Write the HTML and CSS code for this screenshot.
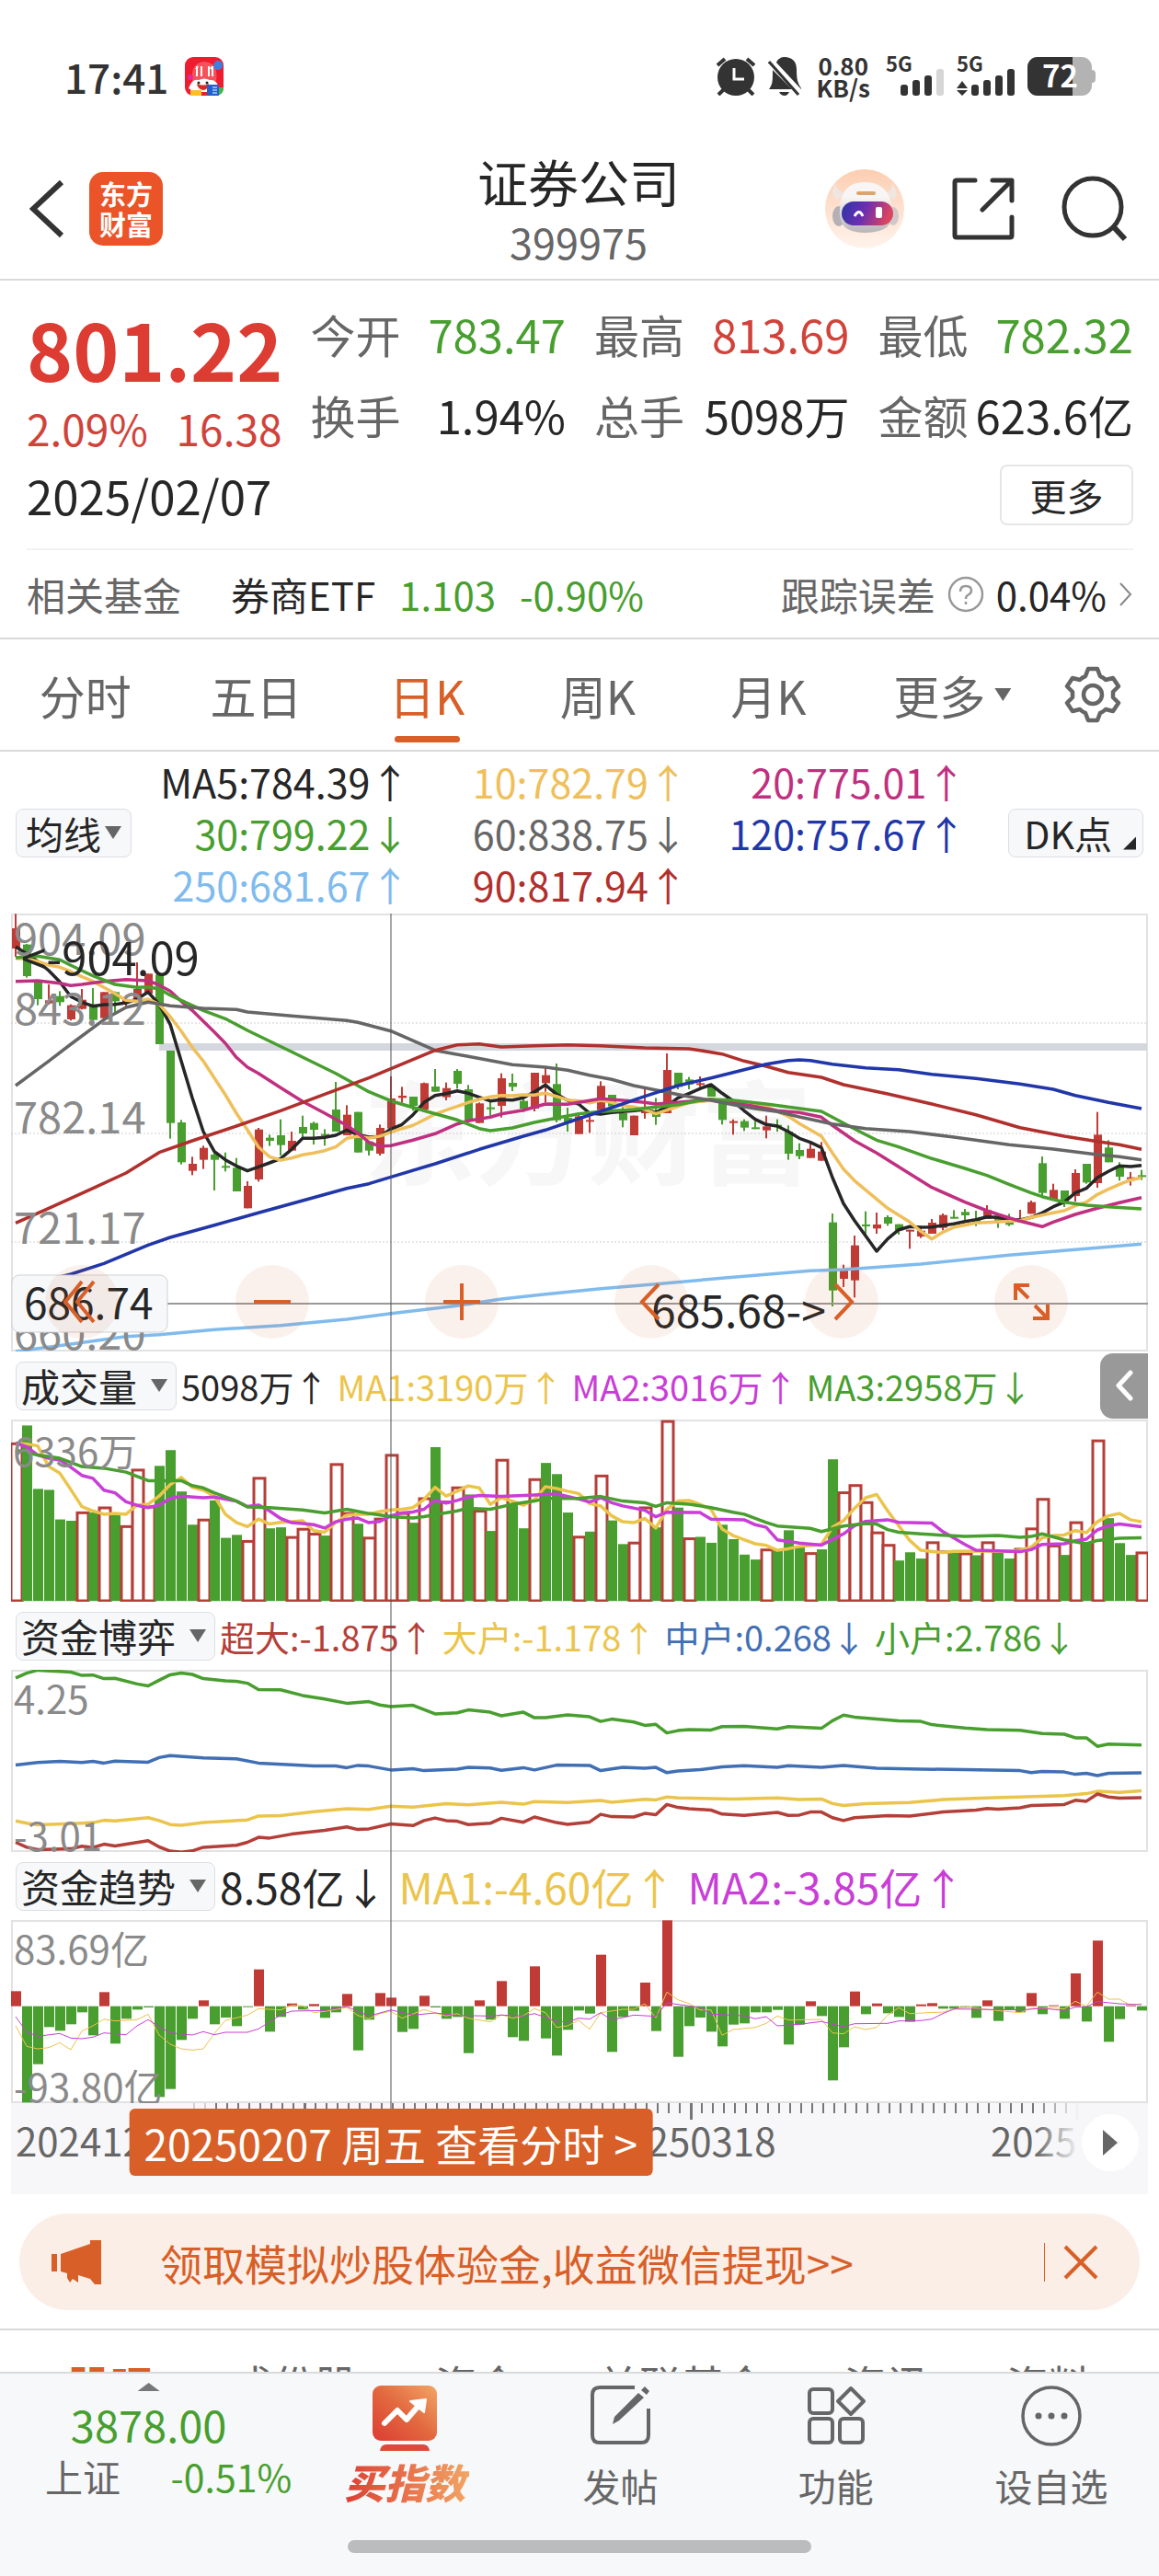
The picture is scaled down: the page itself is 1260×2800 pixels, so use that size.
FILE: index.html
```html
<!DOCTYPE html>
<html lang="zh-CN">
<head>
    <meta charset="UTF-8">
    <meta name="viewport" content="width=device-width, initial-scale=1.0">
    <title>证券公司 399975</title>
    <link rel="stylesheet" href="styles.css">
</head>
<body>
    <div class="status-bar">
        <span class="clock">17:41</span>
        <svg class="app-badge" width="42" height="42" viewBox="0 0 42 42">
            <rect width="42" height="42" rx="9" fill="#ee1c2e"/>
            <path d="M8 26 Q6 6 21 5 Q37 6 34 26z" fill="#f5525c"/>
            <circle cx="36" cy="9" r="5" fill="#3d7fe0"/>
            <circle cx="6" cy="22" r="3" fill="#e22a9a"/>
            <path d="M33 33 h9 v2 a8 8 0 0 1 -8 7z" fill="#43b649"/>
            <path d="M13 10v11M18 10v11M26 10v11M30 10v11M12 13l2-3M28 13l2-3" stroke="#fff" stroke-width="2" fill="none"/>
            <path d="M4 34 Q8 23 15 25 Q21 22 27 25 Q35 24 37 34 L30 38 H10z" fill="#fff"/>
            <path d="M13 29 Q20 32 26 29 Q25 36 20 36 Q14 35 13 29z" fill="#d52b25"/>
            <circle cx="15" cy="28" r="1.5" fill="#222"/>
            <circle cx="24" cy="28" r="1.5" fill="#222"/>
            <rect x="6" y="36" width="12" height="6" fill="#f8c12c"/>
            <rect x="24" y="30" width="13" height="12" rx="1" fill="#1f62cf"/>
            <path d="M30 33h5M30 36h5M30 39h5" stroke="#fff" stroke-width="1"/>
        </svg>
        <div class="status-icons">
            <svg width="44" height="42" viewBox="0 0 44 42">
                <circle cx="22" cy="22" r="20" fill="#333"/>
                <path d="M2 9 L10 2 M34 2 L42 9 M9 35 L3 41 M35 35 L41 41" stroke="#333" stroke-width="4" fill="none"/>
                <path d="M20 12 V24 H31" stroke="#fff" stroke-width="3" fill="none"/>
            </svg>
            <svg width="36" height="42" viewBox="0 0 36 42">
                <path d="M1 35 C5 29 5 27 5 14 L26 35z M9 6 C11 1 15 0 18 0 C26 0 31 5 31 13 C31 24 32 28 36 34 V35z" fill="#333"/>
                <path d="M1 5 L33 41" stroke="#333" stroke-width="3"/>
                <path d="M12 38 H23 Q21 42 18 42 Q14 42 12 38z" fill="#333"/>
            </svg>
            <div class="net-speed"><span>0.80</span><span>KB/s</span></div>
            <svg class="signal" width="64" height="42" viewBox="0 0 64 42">
                <text class="signal-text" x="0" y="16">5G</text>
                <rect x="16" y="30" width="8" height="12" rx="3"/>
                <rect x="29" y="25" width="8" height="17" rx="3"/>
                <rect x="42" y="20" width="8" height="22" rx="3"/>
                <rect x="55" y="13" width="8" height="29" rx="3" fill="#d6d6d6"/>
            </svg>
            <svg class="signal" width="64" height="42" viewBox="0 0 64 42">
                <text class="signal-text" x="0" y="16">5G</text>
                <path d="M0 34 L6 26 L12 34z M0 36 L6 42 L12 36z"/>
                <rect x="16" y="30" width="8" height="12" rx="3"/>
                <rect x="29" y="25" width="8" height="17" rx="3"/>
                <rect x="42" y="20" width="8" height="22" rx="3"/>
                <rect x="55" y="13" width="8" height="29" rx="3"/>
            </svg>
            <svg class="battery" width="74" height="42" viewBox="0 0 74 42">
                <rect x="66" y="14" width="8" height="14" rx="4" fill="#b3b3b3"/>
                <rect width="70" height="42" rx="11" fill="#b3b3b3"/>
                <path d="M11 0 H49 V42 H11 A11 11 0 0 1 0 31 V11 A11 11 0 0 1 11 0z" fill="#333"/>
                <text class="battery-text" x="16" y="33">72</text>
            </svg>
        </div>
    </div>

    <header class="header">
        <div class="header-side">
            <a class="back" href="#" aria-label="返回">
                <svg width="38" height="64" viewBox="0 0 38 64"><path d="M35 3 L4 32 L35 61" fill="none" stroke="#333" stroke-width="6"/></svg>
            </a>
            <a class="brand" href="#"><span>东方</span><span>财富</span></a>
        </div>
        <div class="title">
            <h1>证券公司</h1>
            <span class="code">399975</span>
        </div>
        <div class="header-side header-actions">
            <button aria-label="智能助手">
                <svg width="88" height="88" viewBox="0 0 88 88">
                    <defs>
                        <linearGradient id="halo" x1="0" y1="0" x2="0" y2="1">
                            <stop offset="0" stop-color="#fcceb2"/>
                            <stop offset="1" stop-color="#fff3ec"/>
                        </linearGradient>
                        <linearGradient id="visor" x1="0" y1="0" x2="1" y2="0.2">
                            <stop offset="0" stop-color="#2b35a8"/>
                            <stop offset="0.5" stop-color="#6b2fb0"/>
                            <stop offset="1" stop-color="#dc4560"/>
                        </linearGradient>
                        <linearGradient id="shell" x1="0" y1="0" x2="0" y2="1">
                            <stop offset="0.3" stop-color="#f8f5f4"/>
                            <stop offset="1" stop-color="#b9b4b8"/>
                        </linearGradient>
                    </defs>
                    <circle cx="44" cy="44" r="43" fill="url(#halo)"/>
                    <path d="M12 16 Q6 28 14 34 L24 27 Q14 26 12 16z M74 16 Q82 28 76 34 L66 27 Q74 26 74 16z" fill="#efe6e2"/>
                    <ellipse cx="16" cy="52" rx="7" ry="11" fill="#b5b0b5"/>
                    <ellipse cx="75" cy="52" rx="6" ry="10" fill="#d0c8ca"/>
                    <path d="M17 44 Q18 15 44 15 Q71 15 74 44 Q78 70 44 70 Q14 70 17 44z" fill="url(#shell)"/>
                    <rect x="19" y="36" width="56" height="26" rx="13" fill="url(#visor)"/>
                    <rect x="35" y="25" width="21" height="4" rx="2" fill="#dca56e"/>
                    <path d="M33 52 Q38 43 42 52" stroke="#fff" stroke-width="3" fill="none"/>
                    <rect x="56" y="42" width="7" height="12" rx="2" fill="#fff"/>
                </svg>
            </button>
            <button aria-label="分享">
                <svg width="70" height="70" viewBox="0 0 70 70" fill="none" stroke="#333" stroke-width="5" stroke-linecap="round" stroke-linejoin="round">
                    <path d="M26 4 H6 Q4 4 4 6 V64 Q4 66 6 66 H64 Q66 66 66 64 V44 M45 4 H66 V26 M65 5 L34 36"/>
                </svg>
            </button>
            <button aria-label="搜索">
                <svg width="72" height="72" viewBox="0 0 72 72" fill="none" stroke="#333" stroke-width="5">
                    <circle cx="34" cy="34" r="31"/>
                    <path d="M57 56 L69 69" stroke-width="6"/>
                </svg>
            </button>
        </div>
    </header>

    <section class="quote">
        <div class="quote-grid">
            <div class="quote-main">
                <div class="price">801.22</div>
                <div class="change"><span>2.09%</span><span>16.38</span></div>
            </div>
            <dl class="stats">
                <div><dt>今开</dt><dd class="green">783.47</dd></div>
                <div><dt>换手</dt><dd>1.94%</dd></div>
            </dl>
            <dl class="stats">
                <div><dt>最高</dt><dd class="red">813.69</dd></div>
                <div><dt>总手</dt><dd>5098万</dd></div>
            </dl>
            <dl class="stats">
                <div><dt>最低</dt><dd class="green">782.32</dd></div>
                <div><dt>金额</dt><dd>623.6亿</dd></div>
            </dl>
        </div>
        <div class="quote-date">
            <time datetime="2025-02-07">2025/02/07</time>
            <button class="more">更多</button>
        </div>
        <div class="fund">
            <span class="muted">相关基金</span>
            <a class="fund-name" href="#">券商ETF</a>
            <span class="green">1.103</span>
            <span class="green fund-change">-0.90%</span>
            <a class="fund-error" href="#">
                <span class="muted">跟踪误差</span>
                <svg width="40" height="40" viewBox="0 0 40 40"><circle cx="20" cy="20" r="18" fill="none" stroke="#999" stroke-width="2.5"/><path d="M14 17 Q14 11 20 11 Q26 11 26 16 Q26 19 22 21 Q20 22 20 25 M20 28 V31" fill="none" stroke="#999" stroke-width="2.5"/></svg>
                <span>0.04%</span>
                <svg width="16" height="28" viewBox="0 0 16 28"><path d="M2 2 L13 14 L2 26" fill="none" stroke="#888" stroke-width="2"/></svg>
            </a>
        </div>
    </section>

    <nav class="period-tabs">
        <a href="#">分时</a>
        <a href="#">五日</a>
        <a class="active" href="#">日K</a>
        <a href="#">周K</a>
        <a href="#">月K</a>
        <button class="period-more">更多<i class="caret"></i></button>
        <button class="settings" aria-label="设置">
            <svg width="62" height="62" viewBox="0 0 62 62" fill="none" stroke="#666" stroke-width="4.5" stroke-linejoin="round">
                <path d="M26 3 H36 L39 11 Q42 12 45 15 L53 13 L59 22 L53 28 V34 L59 40 L53 49 L45 47 Q42 50 39 51 L36 59 H26 L23 51 Q20 50 17 47 L9 49 L3 40 L9 34 V28 L3 22 L9 13 L17 15 Q20 12 23 11z"/>
                <circle cx="31" cy="31" r="10"/>
            </svg>
        </button>
    </nav>

    <section class="charts">
        <div class="ma-bar">
            <button class="chip">均线<i class="caret"></i></button>
            <div class="ma-list">
                <span>MA5:784.39<i class="arrow">↑</i></span>
                <span class="c-ma10">10:782.79<i class="arrow">↑</i></span>
                <span class="c-ma20">20:775.01<i class="arrow">↑</i></span>
                <span class="c-ma30">30:799.22<i class="arrow">↓</i></span>
                <span class="c-ma60">60:838.75<i class="arrow">↓</i></span>
                <span class="c-ma120">120:757.67<i class="arrow">↑</i></span>
                <span class="c-ma250">250:681.67<i class="arrow">↑</i></span>
                <span class="c-ma90">90:817.94<i class="arrow">↑</i></span>
            </div>
            <button class="chip chip-dk">DK点<i class="corner"></i></button>
        </div>

        <div class="plots">
            <div class="price-plot">
                <svg id="price-chart" class="chart" viewBox="0 0 1236 476"></svg>
                <div class="chart-tools">
                    <button aria-label="最早"><svg viewBox="0 0 80 80"><path d="M40 18 L22 40 L40 62 M53 18 L35 40 L53 62"/></svg></button>
                    <button aria-label="缩小"><svg viewBox="0 0 80 80"><path d="M20 40 H60"/></svg></button>
                    <button aria-label="放大"><svg viewBox="0 0 80 80"><path d="M20 40 H60 M40 20 V60"/></svg></button>
                    <button aria-label="左移"><svg viewBox="0 0 80 80"><path d="M48 21 L30 40 L48 59"/></svg></button>
                    <button aria-label="右移"><svg viewBox="0 0 80 80"><path d="M33 21 L51 40 L33 59"/></svg></button>
                    <button aria-label="全屏"><svg viewBox="0 0 80 80"><path d="M38 22 H23 V38 M24 23 L37 36 M42 58 H58 V43 M57 57 L44 44"/></svg></button>
                </div>
            </div>

            <div class="indicator">
                <button class="chip">成交量<i class="caret"></i></button>
                <div class="readout">
                    <span>5098万<i class="arrow">↑</i></span>
                    <span class="c-yellow">MA1:3190万<i class="arrow">↑</i></span>
                    <span class="c-purple">MA2:3016万<i class="arrow">↑</i></span>
                    <span class="green">MA3:2958万<i class="arrow">↓</i></span>
                </div>
                <button class="drawer" aria-label="展开">
                    <svg width="20" height="34" viewBox="0 0 20 34"><path d="M17 3 L4 17 L17 31" fill="none" stroke="#fff" stroke-width="5" stroke-linecap="round" stroke-linejoin="round"/></svg>
                </button>
            </div>
            <svg id="volume-chart" class="chart" viewBox="0 0 1236 198"></svg>

            <div class="indicator">
                <button class="chip">资金博弈<i class="caret"></i></button>
                <div class="readout">
                    <span class="c-red">超大:-1.875<i class="arrow">↑</i></span>
                    <span class="c-yellow">大户:-1.178<i class="arrow">↑</i></span>
                    <span class="c-blue">中户:0.268<i class="arrow">↓</i></span>
                    <span class="green">小户:2.786<i class="arrow">↓</i></span>
                </div>
            </div>
            <svg id="flow-chart" class="chart" viewBox="0 0 1236 198"></svg>

            <div class="indicator">
                <button class="chip">资金趋势<i class="caret"></i></button>
                <div class="readout readout-large">
                    <span>8.58亿<i class="arrow">↓</i></span>
                    <span class="c-yellow">MA1:-4.60亿<i class="arrow">↑</i></span>
                    <span class="c-purple">MA2:-3.85亿<i class="arrow">↑</i></span>
                </div>
            </div>
            <svg id="trend-chart" class="chart" viewBox="0 0 1236 199"></svg>

            <div class="axis">
                <svg id="axis" class="chart" viewBox="0 0 1236 99"></svg>
                <button class="axis-next" aria-label="播放"><svg width="16" height="28" viewBox="0 0 16 28"><path d="M0 0 L16 14 L0 28z" fill="#666"/></svg></button>
            </div>

            <div class="crosshair"></div>
            <button class="cursor-date">20250207 周五 查看分时 &gt;</button>
        </div>
    </section>

    <div class="promo">
        <svg width="54" height="48" viewBox="0 0 54 48" fill="#d85f27">
            <path d="M0 15 H6 V34 H0z M10 15 L42 4 V0 H54 V48 H47 L42 42 L29 38 V46 L23 42 L20 46 L17 41 V36 L10 34z"/>
        </svg>
        <a href="#">领取模拟炒股体验金,收益微信提现&gt;&gt;</a>
        <button aria-label="关闭">
            <svg width="38" height="38" viewBox="0 0 38 38"><path d="M2 2 L36 36 M36 2 L2 36" stroke="#d85f27" stroke-width="4"/></svg>
        </button>
    </div>

    <nav class="section-tabs">
        <a class="active" href="#">股吧</a>
        <a href="#">成份股</a>
        <a href="#">资金</a>
        <a href="#">关联基金</a>
        <a href="#">资讯</a>
        <a href="#">资料</a>
    </nav>

    <footer class="bottom-bar">
        <div class="bottom-items">
            <a class="index" href="#">
                <i class="caret-up"></i>
                <span class="index-value">3878.00</span>
                <span class="index-row"><span>上证</span><span class="green">-0.51%</span></span>
            </a>
            <a class="bottom-item buy" href="#">
                <svg width="72" height="72" viewBox="0 0 72 72">
                    <defs>
                        <linearGradient id="warm" x1="0" y1="1" x2="1" y2="0">
                            <stop offset="0" stop-color="#dc3c32"/>
                            <stop offset="0.5" stop-color="#e2683f"/>
                            <stop offset="1" stop-color="#f2a564"/>
                        </linearGradient>
                    </defs>
                    <rect x="1" y="1" width="70" height="60" rx="9" fill="url(#warm)"/>
                    <path d="M9 72 Q10 65 16 65 H56 Q62 65 63 72z" fill="#de4a35"/>
                    <path d="M14 42 L28 28 L38 38 L50 24" fill="none" stroke="#fff" stroke-width="6" stroke-linejoin="round" stroke-linecap="round"/>
                    <path d="M42 18 L59 16 L57 30z" fill="#fff" stroke="#fff" stroke-width="2" stroke-linejoin="round"/>
                </svg>
                <span>买指数</span>
            </a>
            <a class="bottom-item" href="#">
                <svg width="72" height="72" viewBox="0 0 72 72" fill="none" stroke="#666" stroke-width="4">
                    <path d="M51 3 H13 Q5 3 5 11 V55 Q5 63 13 63 H58 Q66 63 66 55 V26"/>
                    <path d="M27 43 L29 35 L55 9 L61 14 L34 39z M58 6 L62 2 L67 7 L64 11z" fill="#666" stroke="none"/>
                </svg>
                <span>发帖</span>
            </a>
            <a class="bottom-item" href="#">
                <svg width="72" height="72" viewBox="0 0 72 72" fill="none" stroke="#666" stroke-width="4">
                    <rect x="7" y="5" width="25" height="26" rx="4"/>
                    <rect x="7" y="37" width="25" height="26" rx="4"/>
                    <rect x="40" y="37" width="25" height="26" rx="4"/>
                    <path d="M52 4 L66 18 L52 32 L38 18z" stroke-linejoin="round"/>
                </svg>
                <span>功能</span>
            </a>
            <a class="bottom-item" href="#">
                <svg width="72" height="72" viewBox="0 0 72 72">
                    <circle cx="36" cy="34" r="31" fill="none" stroke="#666" stroke-width="3.5"/>
                    <g fill="#666"><circle cx="22" cy="34" r="3.5"/><circle cx="36" cy="34" r="3.5"/><circle cx="50" cy="34" r="3.5"/></g>
                </svg>
                <span>设自选</span>
            </a>
        </div>
        <div class="home-indicator"></div>
    </footer>

    <script src="chart.js"></script>
</body>
</html>
```

FILE: styles.css
```css
* {
    box-sizing: border-box;
}

body {
    margin: 0;
    background-color: #fff;
    color: #262626;
    font-family: "Noto Sans CJK SC", "Noto Sans", sans-serif;
    font-size: 42px;
}

a {
    color: inherit;
    text-decoration: none;
}

button {
    padding: 0;
    border: none;
    background: none;
    color: inherit;
    font: inherit;
    cursor: pointer;
}

svg {
    display: block;
    flex-shrink: 0;
}

i {
    font-style: normal;
}

h1, dl, dd {
    margin: 0;
}

.red { color: #d0433a; }
.green { color: #489e2e; }
.muted { color: #666; }
.c-red { color: #b43f38; }
.c-yellow { color: #ebc44b; }
.c-purple { color: #c83ed6; }
.c-blue { color: #416fb4; }
.c-ma10 { color: #efbf5b; }
.c-ma20 { color: #c03080; }
.c-ma30 { color: #489e2e; }
.c-ma60 { color: #666; }
.c-ma90 { color: #b0302d; }
.c-ma120 { color: #2136a8; }
.c-ma250 { color: #80bbee; }

.caret {
    width: 18px;
    height: 14px;
    background-color: #666;
    clip-path: polygon(0 0, 100% 0, 50% 100%);
}

/* status bar */

.status-bar {
    display: flex;
    align-items: center;
    height: 150px;
    padding: 16px 69px 0 70px;
    color: #333;
}

.clock {
    font-size: 44px;
    font-weight: 500;
    line-height: 60px;
}

.app-badge {
    margin-left: 18px;
}

.status-icons {
    display: flex;
    align-items: center;
    gap: 13px;
    margin-left: auto;
}

.net-speed {
    display: flex;
    flex-direction: column;
    align-items: center;
    margin: 0 4px;
    font-size: 26px;
    font-weight: 700;
    line-height: 24px;
}

.signal, .battery {
    overflow: visible;
    fill: #333;
}

.signal-text {
    font-size: 22px;
    font-weight: 700;
}

.battery-text {
    fill: #fff;
    font-size: 33px;
    font-weight: 700;
}

/* header */

.header {
    display: flex;
    align-items: center;
    justify-content: space-between;
    height: 155px;
    padding: 0 34px 0 32px;
    border-bottom: 2px solid #d9d9d9;
}

.header-side {
    display: flex;
    flex: 1;
    align-items: center;
    gap: 27px;
}

.header-actions {
    justify-content: flex-end;
    gap: 50px;
}

.brand {
    display: flex;
    flex-direction: column;
    align-items: center;
    justify-content: center;
    width: 80px;
    height: 80px;
    border-radius: 15px;
    background-color: #eb5429;
    color: #fff;
    font-size: 29px;
    font-weight: 700;
    line-height: 33px;
}

.title {
    text-align: center;
}

.title h1 {
    font-size: 55px;
    font-weight: 400;
    line-height: 72px;
}

.code {
    display: block;
    color: #666;
    font-size: 45px;
    line-height: 62px;
}

/* quote */

.quote {
    padding: 28px 28px 0 29px;
    border-bottom: 2px solid #d9d9d9;
}

.quote-grid {
    display: grid;
    grid-template-columns: repeat(4, minmax(0, 1fr));
    gap: 31px;
}

.price {
    color: #dd3c33;
    font-size: 85px;
    font-weight: 700;
    line-height: 90px;
}

.change {
    display: flex;
    justify-content: space-between;
    margin-top: 12px;
    color: #d0433a;
    font-size: 46px;
    line-height: 60px;
}

.stats {
    display: flex;
    flex-direction: column;
    gap: 28px;
    font-size: 49px;
    line-height: 60px;
}

.stats div {
    display: flex;
    justify-content: space-between;
    white-space: nowrap;
}

.stats dt {
    color: #666;
}

.quote-date {
    display: flex;
    align-items: center;
    justify-content: space-between;
    margin-top: 10px;
    font-size: 51px;
    line-height: 66px;
}

.more {
    width: 145px;
    height: 66px;
    border: 2px solid #e6e6e6;
    border-radius: 8px;
    font-size: 40px;
    line-height: 60px;
}

.fund {
    display: flex;
    align-items: center;
    height: 97px;
    margin-top: 25px;
    border-top: 2px solid #f2f2f4;
}

.fund-name {
    margin: 0 26px 0 54px;
}

.fund-change {
    margin-left: 26px;
}

.fund-error {
    display: flex;
    align-items: center;
    gap: 13px;
    margin-left: auto;
}

/* period tabs */

.period-tabs {
    display: flex;
    align-items: center;
    height: 122px;
    padding-right: 41px;
    border-bottom: 2px solid #d9d9d9;
    color: #666;
    font-size: 50px;
}

.period-tabs a {
    position: relative;
    flex: 1;
    line-height: 122px;
    text-align: center;
}

.period-tabs .active {
    color: #d85f27;
}

.period-tabs .active::after {
    position: absolute;
    bottom: 9px;
    left: 50%;
    width: 71px;
    height: 7px;
    margin-left: -35px;
    border-radius: 4px;
    background-color: #d85f27;
    content: "";
}

.period-more {
    display: flex;
    flex: 1;
    align-items: center;
    gap: 10px;
    padding-left: 43px;
}

/* charts */

.chip {
    display: flex;
    flex-shrink: 0;
    align-items: center;
    height: 53px;
    padding: 0 9px 0 5px;
    border: 1px solid #dcdee2;
    border-radius: 8px;
    background-color: #f6f8fa;
    line-height: 50px;
}

.ma-bar {
    display: flex;
    align-items: center;
    height: 176px;
    padding: 0 17px;
    font-size: 43px;
}

.ma-bar .chip {
    padding: 0 10px 0 10px;
    font-size: 41px;
}

.ma-bar .caret {
    margin-left: 4px;
}

.ma-bar .chip-dk {
    position: relative;
    padding: 0 33px 0 16px;
}

.corner {
    position: absolute;
    right: 7px;
    bottom: 7px;
    width: 14px;
    height: 14px;
    background-color: #262626;
    clip-path: polygon(100% 0, 100% 100%, 0 100%);
}

.ma-list {
    display: grid;
    flex: 1;
    grid-template-columns: 29fr 30fr 30fr;
    padding-right: 56px;
    line-height: 56px;
    text-align: right;
    white-space: nowrap;
}

/* the arrow glyph fills a full square, pull its sides in */
.arrow {
    margin: 0 -10px 0 0;
}

.plots {
    position: relative;
    margin: 0 12px;
}

.chart {
    width: 100%;
    height: auto;
}

.chart text {
    fill: #8a8a8a;
}

.chart .dark {
    fill: #262626;
}

.chart .watermark {
    fill: #f7f7f8;
    font-weight: 700;
}

.price-plot {
    position: relative;
}

.chart-tools {
    position: absolute;
    right: 7%;
    bottom: 14px;
    left: 3%;
    display: flex;
    justify-content: space-between;
}

.chart-tools button {
    width: 80px;
    height: 80px;
    border-radius: 50%;
    background-color: rgba(216, 95, 39, 0.09);
}

.chart-tools path {
    fill: none;
    stroke: #d85f27;
    stroke-width: 4;
}

.indicator {
    display: flex;
    align-items: center;
    height: 74px;
    padding-left: 5px;
}

.indicator .caret {
    margin-left: 15px;
}

.readout {
    display: flex;
    gap: 19px;
    margin-left: 5px;
    font-size: 38px;
    white-space: nowrap;
}

.readout-large {
    gap: 23px;
    font-size: 46px;
}

.drawer {
    display: flex;
    align-items: center;
    justify-content: center;
    width: 52px;
    height: 71px;
    margin-left: auto;
    border-radius: 14px 0 0 14px;
    background-color: #999;
}

.axis {
    position: relative;
    background-color: #f7f7f9;
}

.axis text {
    fill: #666;
}

.axis-next {
    position: absolute;
    top: 12px;
    right: 10px;
    display: flex;
    align-items: center;
    justify-content: center;
    width: 62px;
    height: 62px;
    border-radius: 50%;
    background-color: #fff;
}

.crosshair {
    position: absolute;
    top: 0;
    bottom: 90px;
    left: 33.3%;
    width: 2px;
    background-color: rgba(80, 80, 80, 0.5);
}

.cursor-date {
    position: absolute;
    bottom: 20px;
    left: 33.4%;
    height: 73px;
    padding: 0 16px;
    border-radius: 6px;
    background-color: #d85f27;
    color: #fff;
    font-size: 46px;
    line-height: 68px;
    white-space: nowrap;
    transform: translateX(-50%);
}

/* promo */

.promo {
    display: flex;
    align-items: center;
    height: 105px;
    margin: 21px 21px 20px;
    padding: 0 45px 0 35px;
    border-radius: 53px;
    background-color: #fbeee7;
    color: #d85f27;
    font-size: 46px;
    line-height: 60px;
}

.promo a {
    flex: 1;
    margin-left: 64px;
}

.promo button {
    padding: 2px 0 2px 20px;
    border-left: 1px solid #d85f27;
}

/* section tabs */

.section-tabs {
    display: flex;
    justify-content: space-between;
    height: 47px;
    padding: 17px 74px 0;
    border-top: 2px solid #d9d9d9;
    overflow: hidden;
    color: #666;
    font-size: 46px;
    line-height: 80px;
}

.section-tabs .active {
    color: #d85f27;
    font-weight: 700;
}

/* bottom bar */

.bottom-bar {
    height: 222px;
    border-top: 2px solid #d9dadc;
    background-color: #f6f8fa;
    color: #666;
    font-size: 41px;
}

.bottom-items {
    display: grid;
    grid-template-columns: 323fr repeat(4, 234fr);
    height: 181px;
}

.index {
    display: flex;
    flex-direction: column;
    align-items: center;
}

.caret-up {
    width: 24px;
    height: 9px;
    margin-top: 10px;
    background-color: #777;
    clip-path: polygon(50% 0, 100% 100%, 0 100%);
}

.index-value {
    margin-top: 5px;
    color: #489e2e;
    font-size: 47px;
    line-height: 62px;
}

.index-row {
    display: flex;
    align-self: stretch;
    justify-content: space-between;
    padding: 0 6px 0 49px;
    line-height: 50px;
}

.bottom-item {
    display: flex;
    flex-direction: column;
    align-items: center;
    padding-top: 12px;
    line-height: 60px;
}

.bottom-item span {
    margin-top: 7px;
}

.buy span {
    margin-top: 3px;
    padding: 0 4px;
    background: linear-gradient(90deg, #dc3c32, #f2a564);
    background-clip: text;
    -webkit-background-clip: text;
    color: transparent;
    font-size: 44px;
    font-style: italic;
    font-weight: 900;
}

.home-indicator {
    width: 40%;
    height: 14px;
    margin: 0 auto;
    border-radius: 7px;
    background-color: #bbbcbe;
}
```

FILE: chart.js
```javascript
const STEP = 12;
const FIRST = 5;
const RED = "#c13b36";
const GREEN = "#489e2e";

// one entry per day: colour, high, body top, body bottom, low
const candles = `r 40 87 153 180|g 138 140 243 248|g 262 262 318 338|r 270 322 332 336|g 292 308 328 340|r 335 338 384 388
r 285 320 350 352|g 282 335 386 388|r 295 295 380 380|g 293 295 325 365|r 305 318 330 345|r 198 285 318 318
r 235 235 300 300|g 238 238 465 465|g 486 486 722 773|g 712 720 850 857|r 832 855 878 892|r 796 803 842 872
g 818 825 842 942|g 818 862 867 880|g 836 868 945 945|r 912 927 1000 1000|r 738 743 906 913|g 760 770 780 797
g 710 762 794 828|r 750 780 812 812|g 698 735 756 775|g 718 722 744 792|g 742 758 763 796|g 588 678 750 750
r 664 695 762 762|g 686 686 818 818|g 782 782 812 828|r 727 738 822 828|r 570 642 740 740|r 604 633 640 656
g 636 636 666 682|r 590 592 678 678|g 546 603 620 620|r 590 608 638 648|g 546 552 594 610|g 598 612 712 712
r 655 658 722 722|g 650 671 676 698|r 560 576 666 704|g 561 591 604 618|g 645 650 675 686|r 558 558 675 684
r 540 566 592 655|g 528 595 713 720|g 672 705 722 750|r 690 700 758 758|r 700 712 717 754|r 586 601 680 680
g 630 630 668 668|g 670 690 713 736|r 698 698 762 762|r 604 672 690 708|g 640 690 702 728|r 495 549 690 690
g 558 558 604 612|g 572 580 596 612|r 570 592 597 605|g 600 600 636 636|g 650 650 712 727|r 710 716 721 760
g 710 716 737 748|g 715 736 742 742|r 698 733 746 772|g 710 728 734 750|g 730 750 822 842|g 788 810 830 840
r 786 806 836 836|r 784 815 845 845|g 1017 1046 1268 1320|r 1184 1202 1230 1257|r 1089 1121 1235 1291|g 1010 1053 1058 1086
r 1014 1053 1066 1083|g 1023 1029 1050 1057|g 1052 1052 1072 1086|r 1070 1070 1076 1132|r 1058 1073 1092 1097|r 1035 1047 1083 1083
r 1017 1022 1064 1072|g 1006 1028 1033 1033|g 1002 1012 1023 1038|g 1008 1035 1048 1058|r 990 1006 1034 1034|g 1018 1025 1047 1064
g 1018 1035 1054 1058|r 1005 1034 1040 1040|r 975 980 1018 1018|g 831 853 950 962|r 920 940 970 970|g 942 942 985 996
r 873 885 960 978|g 855 855 916 920|r 686 760 918 933|g 778 802 850 850|g 850 866 897 910|r 882 899 904 926|g 875 892 897 908`
    .split(/[|\n]/).map(row => row.split(" "));

const priceLines = [
    ["#262626", "0:147 1:170 2:195 3:225 4:262 5:310 6:328 7:341 8:336 9:335 10:330 11:318 12:295 13:335 14:400 15:520 16:640 17:750 18:815 19:842 20:862 21:878 22:865 23:852 24:838 25:808 26:772 27:772 28:769 29:762 30:745 31:760 32:768 33:766 34:742 35:727 36:695 37:655 38:632 39:626 40:617 41:625 42:638 43:650 44:646 45:647 46:640 47:620 48:598 49:628 50:648 51:660 52:690 53:693 54:688 56:682 57:678 58:688 59:668 60:640 61:626 62:610 63:597 64:625 65:650 66:682 67:710 68:727 69:732 70:750 71:772 72:785 73:802 74:900 75:985 76:1040 77:1090 78:1140 79:1100 80:1070 81:1060 82:1062 83:1061 84:1056 85:1051 86:1043 87:1037 88:1028 89:1030 90:1037 91:1038 92:1030 93:1015 94:995 95:980 96:950 97:935 98:900 99:880 100:862 101:864 102:860"],
    ["#efbf5b", "0:185 1:187 2:195 3:207 4:214 5:228 6:245 7:260 8:280 9:300 10:322 11:325 12:318 13:335 14:375 15:422 16:475 17:520 18:575 19:630 20:690 21:745 22:800 23:832 24:843 25:836 26:826 27:820 28:812 29:800 30:772 31:765 32:771 33:765 34:752 35:740 36:730 37:712 38:693 39:680 40:668 41:655 42:645 43:637 44:632 45:633 46:630 47:631 48:625 49:635 50:647 51:650 52:656 53:648 54:655 55:665 56:670 57:678 58:692 59:680 60:668 61:656 62:652 63:648 64:652 66:655 68:668 70:700 71:724 73:765 74:820 75:872 76:910 77:940 79:1000 81:1045 82:1075 83:1100 84:1078 85:1062 87:1048 88:1046 91:1040 92:1030 94:1015 95:1008 96:992 97:980 98:955 99:938 100:922 101:908 102:900"],
    ["#c03080", "0:260 2:258 4:266 5:274 6:270 8:260 10:254 12:258 13:272 14:292 15:325 16:355 17:390 18:425 19:462 20:508 21:540 22:560 24:607 26:652 28:690 30:730 31:755 32:785 33:798 34:796 36:778 38:757 40:725 41:715 43:703 44:692 46:680 48:660 50:661 51:655 53:643 55:648 57:655 58:660 60:655 62:648 63:645 65:655 67:668 69:682 71:688 73:703 74:730 76:780 78:820 80:865 82:910 83:932 86:980 88:1008 89:1020 91:1042 93:1060 94:1045 96:1020 98:1000 100:982 102:965"],
    [GREEN, "0:183 2:178 4:190 5:208 6:225 7:242 9:270 11:280 12:278 13:285 14:305 15:322 17:355 19:382 21:420 25:490 29:560 32:620 34:650 37:682 40:712 42:740 43:747 45:738 47:720 49:706 51:692 53:685 56:678 58:670 60:662 62:648 63:645 65:648 68:660 70:670 73:684 75:722 77:760 78:778 80:800 83:838 86:870 88:893 90:922 92:950 93:962 95:980 97:990 99:995 102:1002"],
    ["#666", "0:600 3:520 5:465 8:385 10:345 12:328 14:340 17:348 20:352 21:360 25:373 28:382 30:388 31:394 34:422 38:485 41:505 45:532 48:540 50:550 52:566 54:580 56:600 59:622 61:636 63:648 65:662 67:675 69:685 71:702 74:725 77:740 81:750 85:768 90:793 94:807 98:825 100:832 102:842"],
    ["#b0302d", "0:1048 3:1000 7:935 10:885 13:818 16:780 20:732 24:682 28:628 32:575 35:530 38:485 40:467 42:464 44:474 47:470 50:467 53:470 57:477 61:480 62:485 64:497 66:520 68:537 70:557 73:573 75:597 79:627 83:660 87:695 91:737 95:765 98:782 100:793 102:808"],
    ["#2136a8", "1:1250 5:1215 8:1180 12:1120 14:1095 18:1055 22:1015 26:975 30:935 32:920 34:898 38:855 42:808 46:765 48:745 51:708 54:672 57:635 60:600 63:575 66:548 68:530 70:518 71:516 72:518 74:530 77:542 80:548 83:563 87:577 91:595 94:612 96:632 99:655 102:675"],
    ["#80bbee", "0:1467 5:1443 10:1418 13:1412 18:1396 24:1382 30:1362 34:1343 40:1318 44:1296 48:1280 53:1262 58:1247 64:1228 72:1204 75:1200 82:1182 90:1153 97:1132 102:1117"],
];

const volumes = "r303 g250 g443 g446 g536 g540 r513 g515 r498 g520 r555 r383 r495 g373 g325 g451 g552 r535 g478 g592 g583 r600 r408 g563 g560 r588 r563 r578 g585 r366 r515 g549 r590 r532 r338 r515 g546 r470 g316 r480 r437 g460 r508 g571 r353 g486 g563 r412 g364 g398 g515 r587 g573 r401 g539 g611 r605 r498 g560 r235 g500 r592 g589 g607 g552 g596 g643 g658 r626 g630 g569 g620 r637 g627 g353 r452 r430 r482 r574 r612 g661 g636 g655 r604 r632 g636 r638 g645 r604 g638 g655 r624 r562 r472 r614 g644 r543 g605 r294 g532 g608 g644 r635".split(" ");

const volumeLines = [
    ["#ebc44b", "0:305 1:306 2:312 3:375 4:395 5:445 6:497 7:510 8:520 9:518 10:520 11:492 12:490 13:465 14:430 15:408 16:438 17:447 18:465 19:520 20:545 21:558 22:535 23:550 24:545 25:543 26:540 27:570 28:575 29:545 30:523 31:520 32:520 33:512 34:507 35:505 36:500 37:475 38:438 39:465 40:450 41:434 42:440 43:490 44:470 45:480 46:493 47:475 48:436 49:442 50:450 51:457 52:488 53:495 54:525 55:543 56:546 57:533 58:562 59:505 60:480 61:478 62:490 63:505 64:565 65:585 66:598 67:610 68:615 69:630 70:625 71:618 73:612 74:560 75:540 76:502 77:470 78:460 79:510 80:555 81:600 82:630 84:637 85:633 88:632 90:633 91:630 92:620 93:592 94:585 95:583 96:570 97:576 98:543 99:525 100:518 101:537 102:543"],
    ["#c83ed6", "0:303 1:315 2:340 3:350 4:355 5:377 6:402 7:411 8:447 9:455 10:482 11:493 12:500 13:492 14:472 15:465 17:470 18:468 20:480 21:497 22:492 23:510 24:533 25:546 26:548 27:552 28:562 29:543 30:535 31:532 32:546 33:542 34:525 35:516 36:513 37:505 38:478 39:486 40:478 41:468 42:463 44:466 47:462 49:458 51:474 52:483 53:470 54:485 55:495 57:508 58:528 59:514 62:515 63:535 66:537 67:552 68:560 69:598 71:608 73:614 74:597 75:580 76:555 77:542 79:537 80:545 83:547 84:573 86:612 87:630 91:634 92:628 93:612 95:610 96:601 97:596 98:568 99:555 100:550 102:558"],
    [GREEN, "0:325 2:340 4:350 6:375 8:380 10:392 12:418 15:418 16:433 17:440 18:455 20:480 21:498 23:500 26:507 28:516 30:505 32:518 34:527 36:532 37:527 40:510 41:502 43:505 45:490 47:480 48:472 51:472 53:466 55:480 57:485 58:496 59:485 61:490 63:500 65:514 66:520 68:545 69:556 72:563 73:573 75:556 77:548 78:550 79:567 80:575 82:580 86:588 89:585 91:590 92:588 93:580 95:598 97:610 98:600 100:593 102:592"],
];

const flowLines = [
    [GREEN, "0:1018 1:1003 2:994 4:998 5:1000 6:1010 7:1009 8:1020 9:1019 11:1036 12:1042 13:1025 14:1008 15:1003 16:1007 17:1020 19:1027 20:1028 21:1034 22:1053 24:1054 26:1071 28:1082 30:1095 32:1090 33:1100 34:1105 36:1101 38:1127 40:1124 41:1115 43:1122 44:1133 46:1122 47:1139 48:1139 50:1130 52:1136 53:1150 54:1143 56:1152 57:1162 58:1159 59:1185 60:1178 61:1175 63:1176 64:1166 66:1165 69:1173 70:1166 73:1171 74:1148 75:1131 76:1137 80:1148 82:1150 83:1160 86:1170 88:1175 91:1177 93:1187 95:1189 96:1200 97:1200 98:1226 99:1219 102:1222"],
    ["#416fb4", "0:1283 2:1275 4:1272 6:1275 7:1272 8:1277 9:1271 12:1274 13:1260 14:1254 17:1261 20:1264 22:1277 25:1282 27:1286 29:1286 30:1291 31:1284 32:1286 34:1298 36:1294 37:1300 40:1295 41:1290 43:1292 44:1299 46:1291 47:1298 49:1283 52:1284 53:1300 55:1290 57:1293 58:1290 59:1306 60:1301 62:1297 64:1288 66:1285 69:1290 70:1285 73:1290 75:1284 78:1293 82:1295 86:1297 91:1300 92:1306 93:1302 95:1304 96:1311 97:1308 98:1315 99:1308 102:1307"],
    ["#ebc44b", "0:1453 1:1460 2:1465 6:1460 7:1458 8:1451 9:1453 12:1443 13:1452 14:1464 15:1466 17:1458 21:1450 22:1438 24:1437 27:1425 30:1416 32:1418 34:1408 36:1411 39:1400 41:1404 44:1396 46:1402 47:1394 50:1397 53:1391 54:1396 57:1387 58:1389 59:1380 60:1383 65:1386 69:1383 71:1388 73:1386 74:1400 75:1406 77:1400 81:1397 84:1388 88:1383 93:1378 95:1376 97:1370 98:1363 100:1366 102:1361"],
    ["#b43f38", "0:1518 1:1533 2:1540 5:1538 6:1530 7:1534 8:1524 9:1529 12:1513 13:1532 14:1545 15:1548 16:1544 17:1533 20:1527 21:1518 22:1503 23:1505 25:1493 28:1482 30:1471 31:1479 32:1477 34:1462 36:1467 37:1452 38:1444 39:1452 40:1454 41:1464 43:1460 44:1445 46:1457 47:1441 49:1458 50:1463 52:1456 53:1433 54:1440 56:1441 57:1430 58:1434 59:1403 60:1412 61:1416 63:1420 64:1432 66:1436 69:1427 70:1436 71:1435 72:1426 73:1426 74:1443 75:1452 76:1443 79:1437 81:1438 84:1426 87:1420 88:1415 89:1417 91:1413 92:1406 95:1403 96:1390 97:1393 98:1371 99:1380 100:1384 102:1382"],
];

const trend = [462, 825, 700, 579, 591, 570, 531, 606, 465, 633, 552, 522, 515, 807, 781, 621, 552, 492, 570, 548, 576, 514, 391, 594, 546, 502, 522, 504, 549, 531, 471, 655, 555, 468, 483, 595, 585, 477, 515, 552, 546, 664, 492, 555, 429, 612, 624, 381, 616, 672, 588, 525, 535, 343, 660, 546, 526, 434, 592, 231, 676, 576, 548, 594, 642, 571, 567, 531, 531, 523, 636, 571, 495, 543, 753, 645, 463, 537, 502, 534, 546, 562, 505, 501, 519, 519, 516, 549, 492, 559, 522, 531, 468, 537, 508, 552, 404, 561, 297, 627, 553, 508, 525];

const trendLines = [
    ["#ebc44b", "0:575 1:642 2:650 3:646 4:630 5:653 6:592 7:575 8:553 9:559 11:555 12:537 13:605 14:635 15:650 16:654 17:650 18:600 19:557 20:549 21:540 22:519 24:523 25:508 26:509 27:532 28:528 30:515 31:541 32:552 33:535 34:527 35:550 37:522 39:543 40:535 41:550 43:562 44:538 45:550 46:542 47:519 48:532 49:580 50:575 51:557 52:586 53:532 55:521 56:521 57:503 58:549 59:465 60:490 61:502 62:523 63:523 64:606 65:587 67:580 68:567 69:543 70:556 73:554 74:598 75:601 76:578 77:587 78:580 79:540 80:516 81:535 84:530 86:512 88:522 91:532 92:518 94:516 95:520 96:495 97:511 98:465 99:488 100:488 101:508 102:503"],
    ["#c83ed6", "0:545 1:595 2:609 4:600 5:615 6:617 7:612 8:598 10:604 11:575 12:555 13:578 14:598 16:605 17:594 18:604 19:596 21:596 22:585 24:540 25:527 28:525 30:512 32:543 34:523 36:540 38:533 40:541 43:543 44:540 46:543 47:535 49:560 50:563 51:550 52:553 53:532 54:556 56:540 58:544 59:500 62:515 63:537 66:542 67:552 68:545 69:575 71:570 73:561 75:578 76:568 79:567 80:559 82:558 83:553 84:535 85:520 91:523 93:518 95:525 96:514 97:513 98:496 100:503 102:506"],
];

const x = i => FIRST + i * STEP;
const rect = (left, top, width, height, attrs) => `<rect x="${left}" y="${top}" width="${width}" height="${height}" ${attrs}/>`;
const line = (x1, y1, x2, y2, attrs) => `<line x1="${x1}" y1="${y1}" x2="${x2}" y2="${y2}" ${attrs}/>`;
const label = (left, base, text, size = 42, cls = "") => `<text x="${left}" y="${base}" font-size="${size}" class="${cls}">${text}</text>`;
const frame = height => rect(1, 1, 1234, height - 2, 'fill="none" stroke="#e2e2e4" stroke-width="2"');

function curves(lines, y, width) {
    return lines.map(([color, data]) => {
        const points = data.split(" ").map(p => {
            const [i, v] = p.split(":");
            return `${x(+i)},${y(+v).toFixed(1)}`;
        }).join(" ");
        return `<polyline points="${points}" fill="none" stroke="${color}" stroke-width="${width}" stroke-linejoin="round"/>`;
    }).join("");
}

function drawPrice() {
    const y = v => (v - 39) / 3;
    let out = label(383, 285, "东方财富", 122, "watermark");
    out += frame(476);
    [119, 239, 357].forEach(g => {
        out += line(0, g, 1236, g, 'stroke="#cfcfcf" stroke-dasharray="2 2"');
    });
    out += rect(161, 141, 1074, 8, 'fill="#d5d7df"');
    candles.forEach(([type, high, top, bottom, low], i) => {
        const color = type === "r" ? RED : GREEN;
        out += rect(x(i) - 1, y(high), 2, y(low) - y(high), `fill="${color}"`);
        out += rect(x(i) - 4, y(top), 9, Math.max(2, y(bottom) - y(top)), `fill="${color}"`);
    });
    out += curves(priceLines, y, 3.5);
    out += line(170, 424, 1236, 424, 'stroke="#999" stroke-width="2"');
    out += label(3, 45, "904.09", 47) + label(3, 121, "843.12", 47) + label(3, 239, "782.14", 47);
    out += label(3, 359, "721.17", 47) + label(3, 474, "660.20", 47);
    out += label(11, 67, "&lt;-904.09", 49, "dark");
    out += rect(1, 393, 169, 62, 'rx="8" fill="#f6f8fa" stroke="#cfd1d4"');
    out += label(14, 441, "686.74", 46, "dark");
    out += label(696, 450, "685.68-&gt;", 48, "dark");
    document.getElementById("price-chart").innerHTML = out;
}

function drawVolume() {
    const y = v => (v - 232) / 2.8;
    let out = frame(198);
    volumes.forEach((v, i) => {
        const top = y(+v.slice(1));
        if (v[0] === "r") {
            out += rect(x(i) - 5, top + 1, 12, 196 - top, 'fill="#fff" stroke="#b43f38" stroke-width="3"');
        } else {
            out += rect(x(i) - 5, top, 11, 197 - top, `fill="${GREEN}"`);
        }
    });
    out += curves(volumeLines, y, 3.5);
    out += label(2, 51, "6336万");
    document.getElementById("volume-chart").innerHTML = out;
}

function drawFlow() {
    const y = v => (v - 993) / 2.8;
    document.getElementById("flow-chart").innerHTML = frame(198) + curves(flowLines, y, 3.5)
        + label(3, 48, "4.25") + label(3, 197, "-3.01");
}

function drawTrend() {
    const y = v => (v - 230) / 3;
    const zero = y(511);
    let out = frame(199);
    trend.forEach((v, i) => {
        const end = y(v);
        out += rect(x(i) - 5, Math.min(zero, end), 11, Math.abs(end - zero), `fill="${end < zero ? RED : GREEN}"`);
    });
    out += curves(trendLines, y, 1);
    out += label(3, 48, "83.69亿") + label(3, 198, "-93.80亿");
    document.getElementById("trend-chart").innerHTML = out;
}

function drawAxis() {
    let out = `<defs>
        <linearGradient id="fade"><stop offset="0.9" stop-color="#f7f7f9" stop-opacity="0"/><stop offset="0.94" stop-color="#f7f7f9"/></linearGradient>
    </defs>`;
    for (let t = 198; t <= 1158; t += STEP) {
        const major = (t - 318) % 420 === 0;
        out += rect(t, 0, major ? 3 : 2, major ? 18 : 11, `fill="#777" opacity="${t < 220 ? 0.3 : 1}"`);
    }
    out += label(5, 58, "202412") + label(645, 58, "20250318") + label(1065, 58, "2025");
    out += rect(0, 0, 1236, 99, 'fill="url(#fade)"');
    document.getElementById("axis").innerHTML = out;
}

drawPrice();
drawVolume();
drawFlow();
drawTrend();
drawAxis();
```
